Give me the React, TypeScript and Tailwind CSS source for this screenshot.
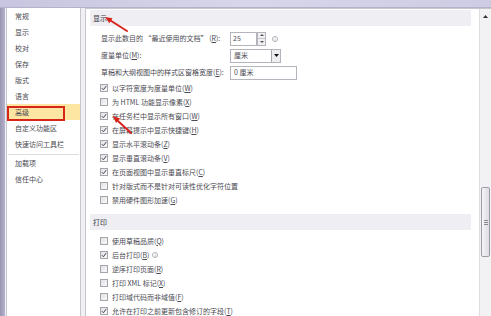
import React from "react";

type Item = { text: string; key?: string; checked: boolean; info?: boolean };

const navItems = ["常规", "显示", "校对", "保存", "版式", "语言", "高级", "自定义功能区", "快速访问工具栏"];
const navExtra = ["加载项", "信任中心"];

const displayChecks: Item[] = [
  { text: "以字符宽度为度量单位", key: "W", checked: true },
  { text: "为 HTML 功能显示像素", key: "X", checked: false },
  { text: "在任务栏中显示所有窗口", key: "W", checked: true },
  { text: "在屏幕提示中显示快捷键", key: "H", checked: true },
  { text: "显示水平滚动条", key: "Z", checked: true },
  { text: "显示垂直滚动条", key: "V", checked: true },
  { text: "在页面视图中显示垂直标尺", key: "C", checked: true },
  { text: "针对版式而不是针对可读性优化字符位置", checked: false },
  { text: "禁用硬件图形加速", key: "G", checked: false },
];

const printChecks: Item[] = [
  { text: "使用草稿品质", key: "Q", checked: false },
  { text: "后台打印", key: "B", checked: true, info: true },
  { text: "逆序打印页面", key: "R", checked: false },
  { text: "打印 XML 标记", key: "X", checked: false },
  { text: "打印域代码而非域值", key: "F", checked: false },
  { text: "允许在打印之前更新包含修订的字段", key: "T", checked: true },
];

function InfoIcon() {
  return (
    <span className="ml-[3px] flex h-[6px] w-[6px] items-center justify-center rounded-full border border-[#b0b0b8] text-[4px] leading-none text-[#a0a0a8]">
      i
    </span>
  );
}

function Checkbox({ checked }: { checked: boolean }) {
  return (
    <span className="flex h-[8px] w-[8px] shrink-0 items-center justify-center border border-[#a4a4ac] bg-gradient-to-br from-[#e2e2e6] to-[#fafafa]">
      {checked && (
        <svg width="6" height="6" viewBox="0 0 6 6">
          <path d="M0.8 3.1 L2.4 4.8 L5.3 0.9" fill="none" stroke="#4a4a56" strokeWidth="1" />
        </svg>
      )}
    </span>
  );
}

function CheckRow({ item }: { item: Item }) {
  return (
    <div className="flex h-[14px] items-center pl-[10px]">
      <Checkbox checked={item.checked} />
      <span className="ml-[4px] whitespace-nowrap">
        {item.text}
        {item.key && (
          <>
            (<span className="underline">{item.key}</span>)
          </>
        )}
      </span>
      {item.info && <InfoIcon />}
    </div>
  );
}

function SectionBand({ title }: { title: string }) {
  return (
    <div className="flex h-[16px] items-center bg-[#eeeef3] pl-[3px] text-[#3a3a42]">{title}</div>
  );
}

function Spinner() {
  return (
    <div className="flex h-[14px] w-[9px] flex-col border border-[#b4b4bc] bg-[#f0f0f2]">
      <div className="flex flex-1 items-center justify-center border-b border-[#c4c4ca]">
        <svg width="4" height="2" viewBox="0 0 4 2">
          <path d="M0 2 L2 0 L4 2 Z" fill="#555" />
        </svg>
      </div>
      <div className="flex flex-1 items-center justify-center">
        <svg width="4" height="2" viewBox="0 0 4 2">
          <path d="M0 0 L2 2 L4 0 Z" fill="#555" />
        </svg>
      </div>
    </div>
  );
}

export default function App() {
  return (
    <div className="relative flex h-[316px] w-[491px] flex-col overflow-hidden bg-[#f1f1f4] font-['Noto_Sans_CJK_SC',sans-serif] text-[7px] leading-none text-[#4a4a52]">
      <div className="h-[8px] shrink-0 border-b border-[#b3b1cb] bg-gradient-to-r from-[#c7c5df] via-[#d8d6ea] to-[#cecce4]" />
      <div className="flex min-h-0 flex-1">
        <div className="w-[5px] shrink-0 bg-gradient-to-r from-[#9896b2] to-[#b4b2cc]" />

        {/* left nav */}
        <nav className="ml-px w-[75px] shrink-0 border-x border-[#c6c6cf] bg-white">
          {navItems.map((n) => (
            <div
              key={n}
              className={`flex h-[16px] items-center pl-[8px] ${n === "高级" ? "bg-[#fce6a2]" : ""}`}
            >
              {n}
            </div>
          ))}
          <div className="mx-[1px] mt-[2px] h-px bg-[#dcdce2]" />
          {navExtra.map((n) => (
            <div key={n} className="flex h-[16px] items-center pl-[8px]">
              {n}
            </div>
          ))}
        </nav>

        {/* main panel */}
        <div className="ml-[4px] flex min-w-0 flex-1 border-l border-t border-[#c6c6cf] bg-white">
          <div className="min-w-0 flex-1 pl-[4px] pr-[8px] pt-[1px]">
            <SectionBand title="显示" />

            <div className="mt-[4px] pl-[11px]">
              <div className="flex h-[17px] items-center">
                <span className="w-[129px] whitespace-nowrap">
                  显示此数目的 “最近使用的文档” (<span className="underline">R</span>):
                </span>
                <div className="flex h-[14px] w-[27px] items-center border border-[#b4b4bc] pl-[2px]">25</div>
                <Spinner />
                <span className="ml-[3px]">
                  <InfoIcon />
                </span>
              </div>
              <div className="flex h-[17px] items-center">
                <span className="w-[129px] whitespace-nowrap">
                  度量单位(<span className="underline">M</span>):
                </span>
                <div className="flex h-[14px] w-[51px] items-center justify-between border border-[#b4b4bc] pl-[3px]">
                  <span>厘米</span>
                  <span className="flex h-[12px] w-[9px] items-center justify-center border-l border-[#a8a8b0] bg-[#eeeef0]">
                    <svg width="5" height="3" viewBox="0 0 5 3">
                      <path d="M0 0 L5 0 L2.5 3 Z" fill="#111" />
                    </svg>
                  </span>
                </div>
              </div>
              <div className="flex h-[17px] items-center">
                <span className="w-[129px] whitespace-nowrap">
                  草稿和大纲视图中的样式区窗格宽度(<span className="underline">E</span>):
                </span>
                <div className="flex h-[14px] w-[67px] items-center border border-[#b4b4bc] pl-[3px]">0 厘米</div>
              </div>
            </div>

            <div>
              {displayChecks.map((c, i) => (
                <CheckRow key={i} item={c} />
              ))}
            </div>

            <div className="mt-[7px]">
              <SectionBand title="打印" />
            </div>
            <div className="mt-[4px]">
              {printChecks.map((c, i) => (
                <CheckRow key={i} item={c} />
              ))}
            </div>
          </div>

          {/* scrollbar */}
          <div className="flex w-[12px] shrink-0 flex-col items-center border-l border-[#dedee2] bg-[#f2f2f4]">
            <div className="flex h-[14px] items-center justify-center">
              <svg width="5" height="3" viewBox="0 0 5 3">
                <path d="M0 3 L2.5 0 L5 3 Z" fill="#333" />
              </svg>
            </div>
            <div className="mt-[164px] flex h-[70px] w-[9px] items-center justify-center rounded-[2px] border border-[#9c9ca6] bg-gradient-to-r from-[#f6f6f8] to-[#dcdce2]">
              <div className="flex flex-col gap-[1px]">
                <div className="h-px w-[4px] bg-[#8a8a94]" />
                <div className="h-px w-[4px] bg-[#8a8a94]" />
                <div className="h-px w-[4px] bg-[#8a8a94]" />
              </div>
            </div>
          </div>
        </div>
      </div>

      {/* annotations */}
      <div className="absolute left-[7px] top-[106px] h-[15px] w-[58px] border-2 border-[#d8251c]" />
      <svg className="pointer-events-none absolute left-0 top-0" width="491" height="316">
        <line x1="127" y1="31" x2="110.5" y2="20.5" stroke="#d8251c" strokeWidth="2" strokeLinecap="round" />
        <polygon points="105,17 112.5,18.3 109.3,23.3" fill="#d8251c" />
        <line x1="131" y1="133" x2="118" y2="121" stroke="#d8251c" strokeWidth="2" strokeLinecap="round" />
        <polygon points="113,116 120.2,118.6 116,123" fill="#d8251c" />
      </svg>
    </div>
  );
}
